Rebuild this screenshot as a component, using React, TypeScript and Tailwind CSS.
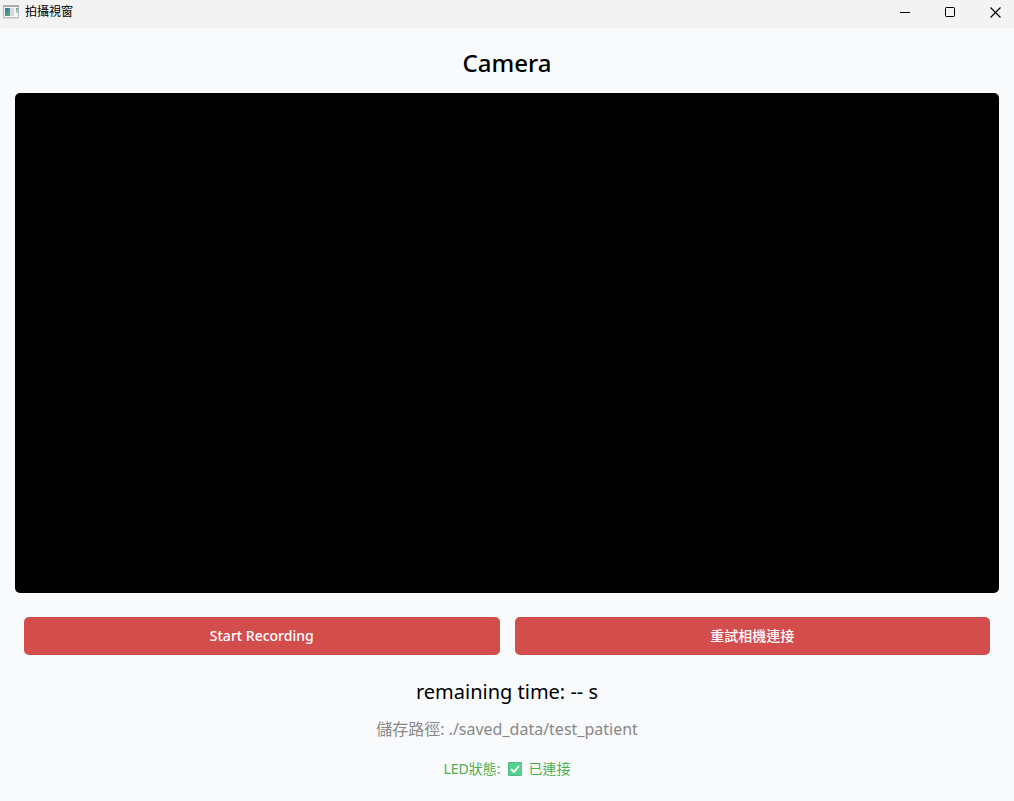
import React from "react";

function AppIcon() {
  return (
    <svg width="16" height="16" viewBox="0 0 16 16" aria-hidden="true">
      <defs>
        <linearGradient id="pane" x1="0" y1="0" x2="1" y2="1">
          <stop offset="0" stopColor="#3c7099" />
          <stop offset="1" stopColor="#58b07c" />
        </linearGradient>
        <linearGradient id="side" x1="0" y1="0" x2="0" y2="1">
          <stop offset="0" stopColor="#6fa3b5" />
          <stop offset="1" stopColor="#b9dcb4" />
        </linearGradient>
      </defs>
      <rect x="0.5" y="1.5" width="15" height="12" fill="#f6f6f6" stroke="#b2b6ba" />
      <path d="M0 2h16" stroke="#a9adb1" strokeWidth="2" />
      <path d="M0 14h16" stroke="#c2c5c8" />
      <rect x="2" y="4" width="5" height="8" fill="url(#pane)" />
      <rect x="7" y="4" width="4" height="8" fill="#d3d9dc" />
      <rect x="13" y="4" width="2" height="5" fill="url(#side)" />
    </svg>
  );
}

const captionButtonClass = "flex h-6 w-[37px] items-center justify-center";

function TitleBar() {
  return (
    <header className="flex h-7 items-start justify-between bg-[#f3f3f3]">
      <div className="flex h-6 items-center gap-1.5 pl-[3px]">
        <AppIcon />
        <span className="text-xs">拍攝視窗</span>
      </div>
      <div className="flex gap-2">
        <button aria-label="Minimize" className={captionButtonClass}>
          <svg width="11" height="11" viewBox="0 0 11 11" fill="none" stroke="#000">
            <path d="M0 5.5h10" />
          </svg>
        </button>
        <button aria-label="Maximize" className={captionButtonClass}>
          <svg width="11" height="11" viewBox="0 0 11 11" fill="none" stroke="#000">
            <rect x="0.5" y="0.5" width="9" height="9" rx="0.7" />
          </svg>
        </button>
        <button aria-label="Close" className={captionButtonClass}>
          <svg width="11" height="11" viewBox="0 0 11 11" fill="none" stroke="#000" strokeWidth="1.1">
            <path d="M.5.5l10 10M10.5.5l-10 10" />
          </svg>
        </button>
      </div>
    </header>
  );
}

const buttonClass =
  "h-[38px] flex-1 rounded-[5px] bg-[#d44d4d] text-sm font-medium text-white";

export default function App() {
  return (
    <div className="flex min-h-screen flex-col bg-[#f8fafc] font-['Noto_Sans','Noto_Sans_CJK_TC',sans-serif] text-black">
      <TitleBar />
      <main className="flex flex-1 flex-col px-[15px] text-center">
        <h1 className="pt-[18px] text-2xl leading-[34px] font-medium">Camera</h1>
        <section aria-label="Camera preview" className="mt-[13px] h-[500px] rounded-[5px] bg-black" />
        <div className="mt-6 flex gap-[15px] px-[9px]">
          <button className={buttonClass}>Start Recording</button>
          <button className={buttonClass}>重試相機連接</button>
        </div>
        <p className="mt-[23px] text-xl leading-7">remaining time: -- s</p>
        <p className="mt-[11px] text-base leading-6 text-[#888888]">儲存路徑: ./saved_data/test_patient</p>
        <p className="mt-4 flex items-center justify-center gap-[7px] text-sm leading-6 text-[#4caf50]">
          <span>LED狀態:</span>
          <svg width="14" height="14" viewBox="0 0 14 14" role="img" aria-label="OK">
            <rect width="14" height="14" rx="1" fill="#4cb982" />
            <rect x="1" y="1" width="13" height="12" fill="#54d090" />
            <path d="M3 7l3 3 5-6" fill="none" stroke="#fff" strokeWidth="1.8" />
          </svg>
          <span>已連接</span>
        </p>
      </main>
    </div>
  );
}
